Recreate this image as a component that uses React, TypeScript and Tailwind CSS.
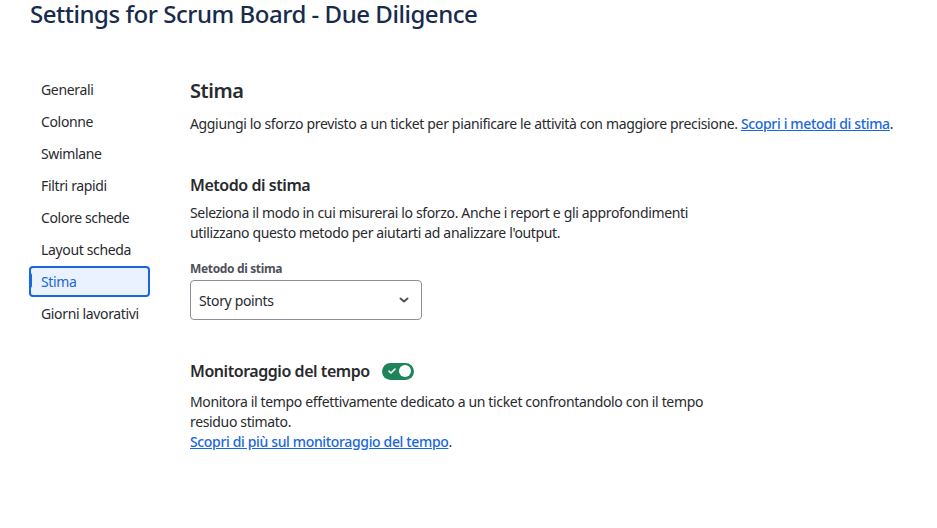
import React from 'react';

const navItems = [
  'Generali',
  'Colonne',
  'Swimlane',
  'Filtri rapidi',
  'Colore schede',
  'Layout scheda',
  'Stima',
  'Giorni lavorativi',
];

const SettingsNav: React.FC<{ active: string }> = ({ active }) => (
  <nav className="flex w-[121px] shrink-0 flex-col gap-px -ml-px">
    {navItems.map((item) =>
      item === active ? (
        <div
          key={item}
          className="relative flex h-[31px] items-center rounded-[4px] border-2 border-[#1868db] bg-[#e9f2fe] pl-[10px] text-[14px] text-[#1868db]"
        >
          <span className="absolute -left-[2px] top-[5px] h-[15px] w-[3px] rounded-r-[2px] bg-[#1868db]" />
          {item}
        </div>
      ) : (
        <div
          key={item}
          className="flex h-[31px] items-center pl-[12px] text-[14px] text-[#292a2e]"
        >
          {item}
        </div>
      )
    )}
  </nav>
);

export default function App() {
  const [tracking, setTracking] = React.useState(true);

  return (
    <div className="min-h-[528px] bg-white pl-[30px] font-['Noto_Sans',sans-serif] tracking-[-0.35px] text-[#292a2e]">
      <h1 className="text-[24px] leading-[28px] font-medium tracking-[-0.47px] text-[#172b4d]">
        Settings for Scrum Board - Due Diligence
      </h1>

      <div className="mt-[46px] flex gap-[40px]">
        <SettingsNav active="Stima" />

        <div className="flex flex-col">
          <h2 className="mt-[5px] text-[20px] leading-[24px] font-semibold tracking-[-0.45px] text-[#292a2e]">
            Stima
          </h2>
          <p className="mt-[11px] text-[14px] leading-[20px]">
            Aggiungi lo sforzo previsto a un ticket per pianificare le attività con maggiore precisione.{' '}
            <a className="font-medium text-[#1868db] underline" href="#">
              Scopri i metodi di stima
            </a>
            .
          </p>

          <h3 className="mt-[41px] text-[16px] leading-[20px] font-semibold tracking-[-0.45px]">
            Metodo di stima
          </h3>
          <p className="mt-[8px] w-[540px] text-[14px] leading-[20px]">
            Seleziona il modo in cui misurerai lo sforzo. Anche i report e gli approfondimenti
            utilizzano questo metodo per aiutarti ad analizzare l'output.
          </p>

          <label className="mt-[18px] text-[12px] leading-[16px] font-bold text-[#505258]">
            Metodo di stima
          </label>
          <div className="mt-[3px] flex h-[40px] w-[232px] items-center justify-between rounded-[4px] border border-[#8c8f97] pl-[8px] pr-[12px] text-[14px]">
            <span>Story points</span>
            <svg width="10" height="8" viewBox="0 0 10 8" className="text-[#505258]">
              <path d="M1.5 2.5 L5 5.5 L8.5 2.5" fill="none" stroke="currentColor" strokeWidth="2" strokeLinecap="round" strokeLinejoin="round" />
            </svg>
          </div>

          <div className="mt-[39px] flex h-[24px] items-center gap-[12px]">
            <h3 className="text-[16px] leading-[24px] font-semibold tracking-[-0.45px]">Monitoraggio del tempo</h3>
            <button
              onClick={() => setTracking(!tracking)}
              className={
                tracking
                  ? 'relative flex h-[17px] w-[32px] items-center rounded-full bg-[#1f845a]'
                  : 'relative flex h-[17px] w-[32px] items-center rounded-full bg-[#8590a2]'
              }
            >
              {tracking && (
                <svg width="10" height="10" viewBox="0 0 10 10" className="absolute left-[5px] top-[3.5px]">
                  <path d="M2 5.2 L4 7 L8 3" fill="none" stroke="white" strokeWidth="1.6" strokeLinecap="round" strokeLinejoin="round" />
                </svg>
              )}
              <span
                className={
                  tracking
                    ? 'absolute right-[3px] top-[2.5px] h-[12px] w-[12px] rounded-full bg-white'
                    : 'absolute left-[3px] top-[2.5px] h-[12px] w-[12px] rounded-full bg-white'
                }
              />
            </button>
          </div>
          <p className="mt-[9px] w-[540px] text-[14px] leading-[20px]">
            Monitora il tempo effettivamente dedicato a un ticket confrontandolo con il tempo
            residuo stimato.
            <br />
            <a className="font-medium text-[#1868db] underline" href="#">
              Scopri di più sul monitoraggio del tempo
            </a>
            .
          </p>
        </div>
      </div>
    </div>
  );
}
